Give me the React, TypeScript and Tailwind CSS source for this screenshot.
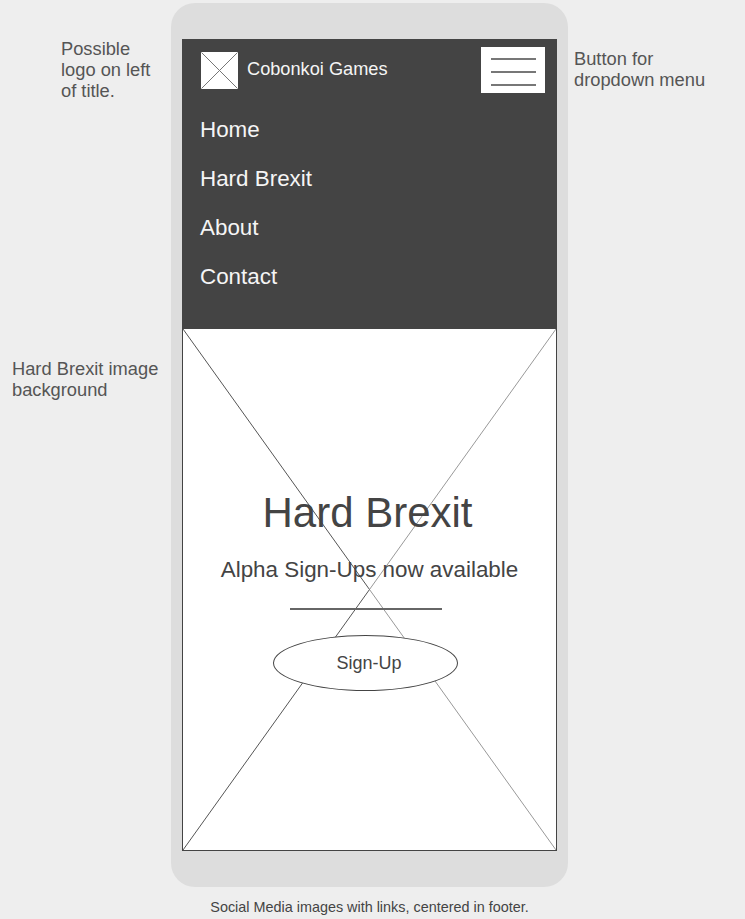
const sans = { fontFamily: '"Liberation Sans", Arial, sans-serif' };

function CrossBox({ className }: { className?: string }) {
  return (
    <svg className={className} viewBox="0 0 373 521" preserveAspectRatio="none">
      <line x1="0" y1="0" x2="186.5" y2="260.5" stroke="#555" strokeWidth="1" vectorEffect="non-scaling-stroke" />
      <line x1="186.5" y1="260.5" x2="373" y2="521" stroke="#999" strokeWidth="1" vectorEffect="non-scaling-stroke" />
      <line x1="373" y1="0" x2="186.5" y2="260.5" stroke="#999" strokeWidth="1" vectorEffect="non-scaling-stroke" />
      <line x1="186.5" y1="260.5" x2="0" y2="521" stroke="#555" strokeWidth="1" vectorEffect="non-scaling-stroke" />
    </svg>
  );
}

function Logo() {
  return (
    <svg width="37" height="37" viewBox="0 0 37 37" className="shrink-0">
      <rect x="0" y="0" width="37" height="37" fill="#fff" />
      <line x1="0.5" y1="0.5" x2="36.5" y2="36.5" stroke="#777" strokeWidth="1" />
      <line x1="36.5" y1="0.5" x2="0.5" y2="36.5" stroke="#777" strokeWidth="1" />
    </svg>
  );
}

const navItems = ["Home", "Hard Brexit", "About", "Contact"];

export default function App() {
  return (
    <div className="min-h-[919px] w-[745px] bg-[#eeeeee] text-[#555]" style={sans}>
      <div className="flex pt-[3px]">
        {/* left notes */}
        <div className="w-[171px] shrink-0 text-[18.3px] leading-[21px]">
          <p className="mt-[35px] pl-[61px]">
            Possible
            <br />
            logo on left
            <br />
            of title.
          </p>
          <p className="mt-[257px] pl-[12px]">
            Hard Brexit image
            <br />
            background
          </p>
        </div>

        {/* phone */}
        <div className="flex w-[397px] shrink-0 flex-col">
          <div className="rounded-[24px] bg-[#dddddd] px-[11px] pb-[36px] pt-[36px]">
            <header className="bg-[#444444] pb-[27px] pt-[8px]">
              <div className="flex items-center pl-[19px] pr-[12px]">
                <Logo />
                <span className="ml-[9px] text-[18.2px] text-[#f5f5f5]">Cobonkoi Games</span>
                <button className="ml-auto flex h-[46px] w-[64px] flex-col items-center justify-center gap-[11px] bg-white pt-[4px]">
                  <span className="block h-[2px] w-[45px] bg-[#777]" />
                  <span className="block h-[2px] w-[45px] bg-[#777]" />
                  <span className="block h-[2px] w-[45px] bg-[#777]" />
                </button>
              </div>
              <nav className="mt-[12px] flex flex-col pl-[18px]">
                {navItems.map((item) => (
                  <a key={item} className="text-[22.4px] leading-[49px] text-[#f5f5f5]">
                    {item}
                  </a>
                ))}
              </nav>
            </header>

            <section className="relative h-[523px] border border-[#444] bg-white">
              <CrossBox className="absolute inset-0 h-full w-full" />
              <div className="relative flex flex-col items-center pt-[160px] text-[#444]">
                <h1 className="mr-[4px] text-[42px] leading-[48px]">Hard Brexit</h1>
                <p className="mt-[19px] text-[22.4px] leading-[28px]">Alpha Sign-Ups now available</p>
                <div className="mr-[7px] mt-[24px] h-[2px] w-[152px] bg-[#666]" />
                <button className="mr-[8px] mt-[25px] flex h-[56px] w-[185px] items-center justify-center rounded-[50%] border border-[#444] bg-white pl-[7px] text-[18px] text-[#444]">
                  Sign-Up
                </button>
              </div>
            </section>
          </div>
          <p className="mt-[12px] text-center text-[14.4px] leading-[16px] text-[#444]">
            Social Media images with links, centered in footer.
          </p>
        </div>

        {/* right notes */}
        <div className="pl-[6px] text-[18.3px] leading-[21px]">
          <p className="mt-[45px]">
            Button for
            <br />
            dropdown menu
          </p>
        </div>
      </div>
    </div>
  );
}
